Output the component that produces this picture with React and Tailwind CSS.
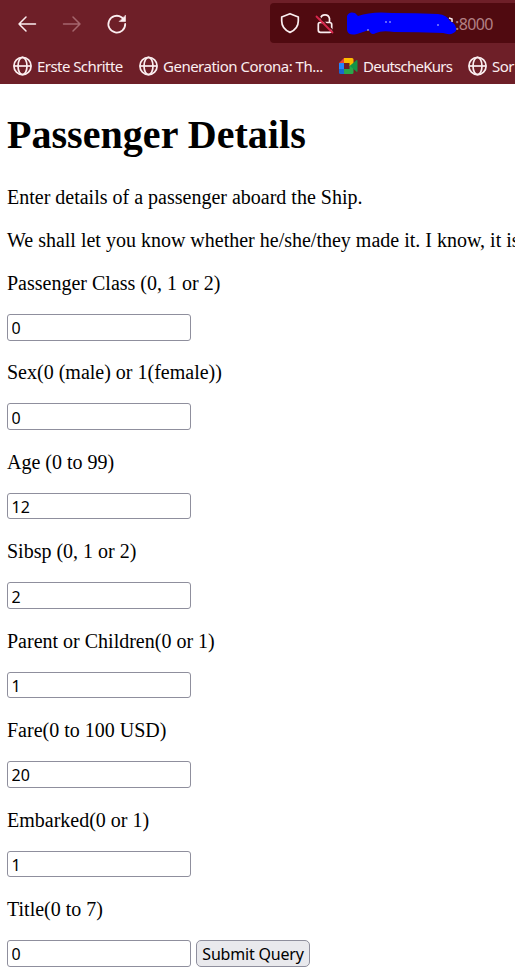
import React from "react";

const fields = [
  ["Passenger Class (0, 1 or 2)", "0"],
  ["Sex(0 (male) or 1(female))", "0"],
  ["Age (0 to 99)", "12"],
  ["Sibsp (0, 1 or 2)", "2"],
  ["Parent or Children(0 or 1)", "1"],
  ["Fare(0 to 100 USD)", "20"],
  ["Embarked(0 or 1)", "1"],
  ["Title(0 to 7)", "0"],
];

function Globe() {
  return (
    <svg className="size-5 shrink-0" viewBox="0 0 20 20" fill="none" stroke="#fbeef0" strokeWidth="1.7">
      <circle cx="9.5" cy="10" r="8.6" />
      <ellipse cx="9.5" cy="10" rx="4.5" ry="8.6" />
      <path d="M1 10H18" />
    </svg>
  );
}

function Meet() {
  return (
    <svg className="h-4 w-[19px] shrink-0" viewBox="0 0 19 16">
      <path d="M0 5L5 0V5Z" fill="#ea4335" />
      <path d="M0 5H5V11H0Z" fill="#2684fc" />
      <path d="M0 11H5V16H1.5Q0 16 0 14.5Z" fill="#1a66d2" />
      <path d="M5 0H13Q14.5 0 14.5 1.5V8L10.5 8V5H5Z" fill="#ffba00" />
      <path d="M5 11H10.5V8L14.5 5V14.5Q14.5 16 13 16H5Z" fill="#2aa84a" />
      <path d="M11 8L17.3 2.3Q18.5 1.5 18.5 3V13Q18.5 14.5 17.3 13.6Z" fill="#159447" />
    </svg>
  );
}

function Toolbar() {
  return (
    <div className="flex h-[50px] items-start">
      <svg className="h-[46px] w-[270px] shrink-0" viewBox="0 0 270 46" fill="none" strokeWidth="1.5" strokeLinecap="round" strokeLinejoin="round">
        <path d="M35.5 24H19M26 17L19 24L26 31" stroke="#fbeef0" />
        <path d="M63.5 24H80M73 17L80 24L73 31" stroke="#a5666d" />
        <path d="M125.2 24A8.4 8.4 0 1 1 121.5 17.2L123 18.5" stroke="#fbeef0" strokeWidth="1.8" />
        <path d="M125.5 15.5V21.5H119.5Z" fill="#fbeef0" stroke="#fbeef0" strokeWidth="0.6" />
      </svg>
      <div className="mt-[3px] flex h-10 w-[245px] items-center rounded-l bg-[#500a10]">
        <svg className="h-10 w-[185px] shrink-0" viewBox="270 3 185 40" fill="none" strokeLinecap="round" strokeLinejoin="round">
          <path d="M290 13.7L298.3 17V21C298.3 26 295 30.2 290 32.4C285 30.2 281.7 26 281.7 21V17Z" stroke="#fbeef0" strokeWidth="1.7" />
          <path d="M320 22.5H329.5Q331.7 22.5 331.7 24.5V30.3Q331.7 32.3 329.5 32.3H320.5Q318.3 32.3 318.3 30.3V24.5Q318.3 22.5 320 22.5M320.5 19V18.5A4.6 4.6 0 0 1 329.5 18.5V22" stroke="#fbeef0" strokeWidth="1.7" />
          <path d="M318.5 16L333.5 31" stroke="#500a10" strokeWidth="1.2" />
          <path d="M316.5 16.5L332.5 32.5" stroke="#d9264c" strokeWidth="1.8" />
        </svg>
        <span className="relative top-px font-['Noto_Sans'] text-base tracking-[-0.6px] text-[#b38085]">
          :8000
          <svg className="absolute -left-[109px] -top-[9px] h-10 w-[112px]" viewBox="346 4 112 40">
            <path d="M449 19L452 20V23" stroke="#fbeef0" fill="none" strokeWidth="1.5" />
            <path d="M347 17Q349 12 355 14L358 17Q372 12 392 14Q416 14 438 15Q447 16 450 22Q457 25 456 32Q452 37 443 34Q418 33 394 33Q382 31 376 34Q371 37 369 31L357 35Q348 37 347 31Z" fill="#0000ff" />
            <path d="M385 23H387M389 23H391M437 26H439M367 31H369" stroke="#bfc6ff" />
          </svg>
        </span>
      </div>
    </div>
  );
}

function Bookmarks() {
  return (
    <div className="flex h-8 items-center whitespace-nowrap pl-[13px] font-['Noto_Sans'] text-[15px] text-[#fbeef0]">
      <div className="flex w-[126px] shrink-0 items-center gap-1"><Globe /><span className="tracking-[-0.56px]">Erste Schritte</span></div>
      <div className="flex w-[200px] shrink-0 items-center gap-1"><Globe /><span className="tracking-[-0.5px]">Generation Corona: Th...</span></div>
      <div className="flex w-[129px] shrink-0 items-center gap-[5px]"><Meet /><span className="tracking-[-0.75px]">DeutscheKurs</span></div>
      <div className="flex shrink-0 items-center gap-1"><Globe /><span className="tracking-[-0.5px]">Sor</span></div>
    </div>
  );
}

export default function App() {
  return (
    <div className="h-[979px] w-full overflow-hidden bg-white font-['Liberation_Serif'] text-black">
      <header className="h-[84px] overflow-hidden bg-[#6e1f28]">
        <Toolbar />
        <Bookmarks />
      </header>
      <main className="pl-[7px] text-[20px] leading-6">
        <h1 className="h-[101px] pt-[29px] text-[40px] font-bold leading-[44px] tracking-[0.04px]">Passenger Details</h1>
        <p className="h-[43px]">Enter details of a passenger aboard the Ship.</p>
        <p className="h-[43px] whitespace-nowrap">We shall let you know whether he/she/they made it. I know, it is</p>
        <form onSubmit={(e) => e.preventDefault()}>
          {fields.map(([label, value], i) => (
            <div key={label} className="h-[89.45px]">
              <label className="block h-[43px]">{label}</label>
              <div className="flex gap-[5px]">
                <input defaultValue={value} className="h-[26.5px] w-[184px] rounded-[3px] border border-[#8f8f9d] px-[3.5px] pt-[2px] font-['Noto_Sans'] text-base" />
                {i === fields.length - 1 && (
                  <button className="h-[26.5px] w-[114px] whitespace-nowrap rounded-[5px] border border-[#8f8f9d] bg-[#e9e9ed] pt-px text-center font-['Noto_Sans'] text-base leading-[25px] tracking-[-0.2px]">Submit Query</button>
                )}
              </div>
            </div>
          ))}
        </form>
      </main>
    </div>
  );
}
